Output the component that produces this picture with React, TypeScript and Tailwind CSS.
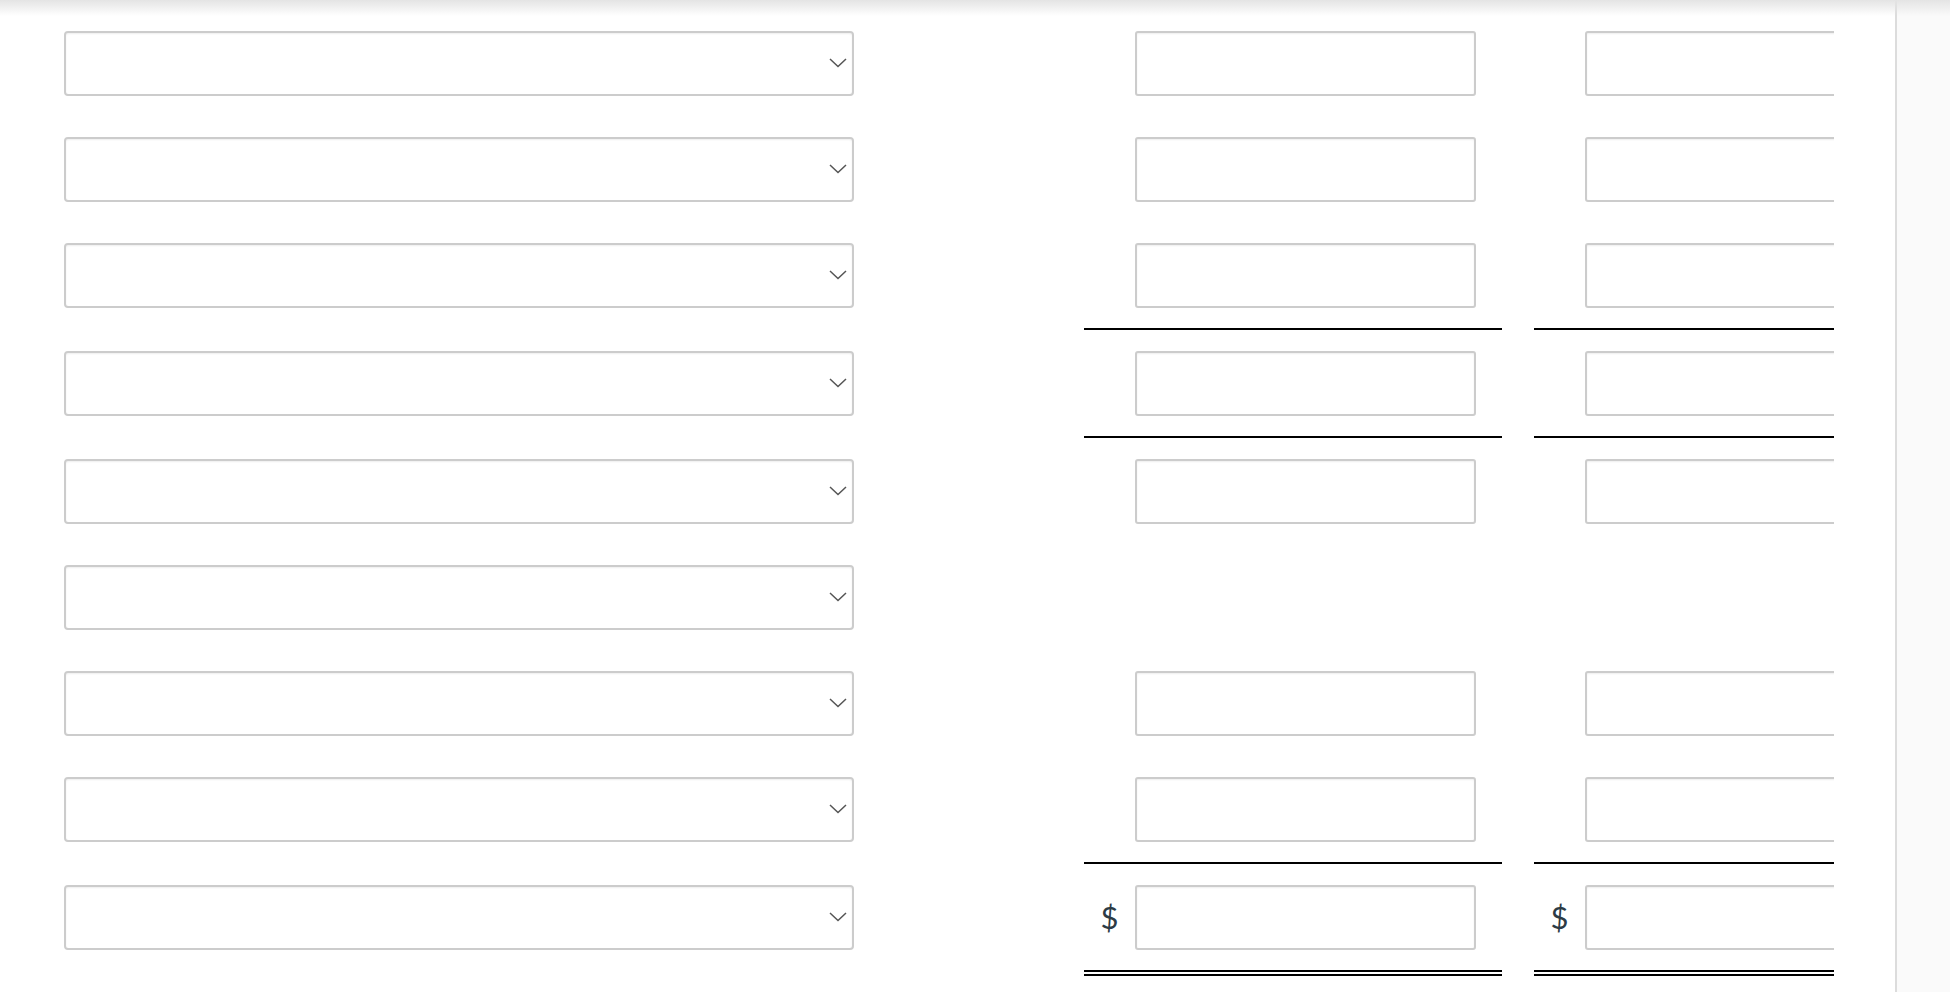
type Row = { inputs: boolean; rule?: "single" | "double"; dollar?: boolean };

const rows: Row[] = [
  { inputs: true },
  { inputs: true },
  { inputs: true, rule: "single" },
  { inputs: true, rule: "single" },
  { inputs: true },
  { inputs: false },
  { inputs: true },
  { inputs: true, rule: "single" },
  { inputs: true, rule: "double", dollar: true },
];

function Chevron() {
  return (
    <svg width="18" height="10" viewBox="0 0 18 10" fill="none">
      <path d="M1 1L9 8.5L17 1" stroke="#555" strokeWidth="1.5" />
    </svg>
  );
}

function Select() {
  return (
    <div className="flex h-[65px] w-[790px] items-center justify-end rounded-[4px] border-2 border-[#cccccc] bg-white pr-[5px] shadow-[inset_0_1px_2px_rgba(0,0,0,0.07)]">
      <Chevron />
    </div>
  );
}

function AmountCell({ row }: { row: Row }) {
  const rule =
    row.rule === "single"
      ? "border-b-2 border-black"
      : row.rule === "double"
        ? "border-b-[6px] border-double border-black"
        : "";
  return (
    <div className={`flex h-[106px] w-[418px] shrink-0 items-center box-content ${rule}`}>
      <div className="flex w-[51px] shrink-0 justify-center pt-[1px] font-['Lato',sans-serif] text-[31px] leading-none text-[#2d3b45]">
        {row.dollar ? "$" : ""}
      </div>
      {row.inputs && (
        <div className="h-[65px] w-[341px] shrink-0 rounded-[3px] border-2 border-[#cccccc] bg-white shadow-[inset_0_1px_2px_rgba(0,0,0,0.07)]" />
      )}
    </div>
  );
}

export default function App() {
  return (
    <div className="relative flex h-[992px] w-[1950px] overflow-hidden bg-white font-['Lato',sans-serif]">
      <div className="w-[1895px] shrink-0">
        <div className="w-[1834px] overflow-hidden pt-[10px]">
          {rows.map((row, i) => (
            <div key={i} className="flex items-start">
              <div className="flex h-[106px] shrink-0 items-center pl-[64px]">
                <Select />
              </div>
              <div className="ml-[230px] flex shrink-0 gap-[32px]">
                <AmountCell row={row} />
                <AmountCell row={row} />
              </div>
            </div>
          ))}
        </div>
      </div>
      <div className="flex-1 border-l-2 border-[#dcdcdc] bg-[#fafafa]" />
      <div className="pointer-events-none absolute inset-x-0 top-0 h-[16px] bg-linear-to-b from-[#e4e4e4] to-white/0" />
    </div>
  );
}
